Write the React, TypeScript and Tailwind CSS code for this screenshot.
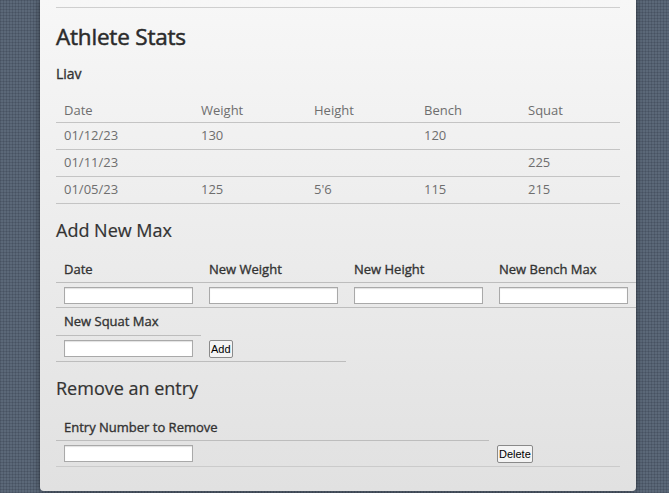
const STATS = [
  { date: '01/12/23', weight: '130', height: '', bench: '120', squat: '' },
  { date: '01/11/23', weight: '', height: '', bench: '', squat: '225' },
  { date: '01/05/23', weight: '125', height: "5'6", bench: '115', squat: '215' },
]

const COLS = ['w-[137px]', 'w-[113px]', 'w-[110px]', 'w-[104px]', 'w-[100px]']

function Field() {
  return (
    <input
      type="text"
      className="block w-[129px] h-[17px] bg-white border border-[#a9a9a9] shadow-[inset_0_1px_1px_rgba(0,0,0,0.12)] outline-none"
    />
  )
}

function Btn({ label }: { label: string }) {
  return (
    <button className="h-[18px] px-px bg-[#f4f4f4] border border-[#8a8a8a] rounded-[2px] text-[11px] leading-none font-normal text-black [-webkit-text-stroke:0] font-['Liberation_Sans',sans-serif]">
      {label}
    </button>
  )
}

export default function App() {
  return (
    <div className="min-h-[493px] h-[493px] overflow-hidden bg-[#5b6878] bg-[linear-gradient(90deg,rgba(30,40,55,0.18)_1px,transparent_1px),linear-gradient(rgba(30,40,55,0.18)_1px,transparent_1px)] bg-size-[3px_3px] font-['Open_Sans',sans-serif]">
      <div className="ml-[40px] w-[596px] h-[491px] rounded-b-[4px] bg-linear-to-b from-[#f7f7f7] to-[#e1e1e1] shadow-[0_0_6px_rgba(0,0,0,0.45)] px-4">
        {/* top rule of previous block */}
        <div className="h-[8px] border-b border-[#cfcfcf]" />

        <h1 className="mt-[14px] text-[22.5px] leading-[30px] font-normal [-webkit-text-stroke:0.5px] text-[#2b2b2b] tracking-[-0.2px]">
          Athlete Stats
        </h1>
        <p className="mt-[12px] text-[14px] leading-[20px] font-normal [-webkit-text-stroke:0.35px] text-[#333]">Liav</p>

        {/* stats table */}
        <div className="mt-[15px] w-[564px] text-[13px] text-[#6e6e6e]">
          <div className="flex h-[24px] items-center border-b border-[#c4c4c4]">
            {['Date', 'Weight', 'Height', 'Bench', 'Squat'].map((h, i) => (
              <div key={h} className={`${COLS[i]} px-2`}>{h}</div>
            ))}
          </div>
          {STATS.map((r) => (
            <div key={r.date} className="flex h-[27px] items-center border-b border-[#c4c4c4]">
              {[r.date, r.weight, r.height, r.bench, r.squat].map((v, i) => (
                <div key={i} className={`${COLS[i]} px-2`}>{v}</div>
              ))}
            </div>
          ))}
        </div>

        <h2 className="mt-[13px] text-[18px] leading-[26px] font-normal [-webkit-text-stroke:0.2px] text-[#333]">Add New Max</h2>

        {/* add new max form */}
        <div className="mt-[14px] w-[580px] text-[13px] font-normal [-webkit-text-stroke:0.35px] text-[#333]">
          <div className="flex h-[26px] items-center border-b border-[#bdbdbd]">
            {['Date', 'New Weight', 'New Height', 'New Bench Max'].map((h) => (
              <div key={h} className="w-[145px] px-2">{h}</div>
            ))}
          </div>
          <div className="flex h-[25px] items-center border-b border-[#bdbdbd]">
            {[0, 1, 2, 3].map((i) => (
              <div key={i} className="w-[145px] px-2"><Field /></div>
            ))}
          </div>
        </div>

        <div className="w-[290px] text-[13px] font-normal [-webkit-text-stroke:0.35px] text-[#333]">
          <div className="w-[145px] h-[28px] px-2 flex items-center border-b border-[#bdbdbd]">New Squat Max</div>
          <div className="flex h-[26px] items-center border-b border-[#bdbdbd]">
            <div className="w-[145px] px-2"><Field /></div>
            <div className="w-[145px] px-2"><Btn label="Add" /></div>
          </div>
        </div>

        <h2 className="mt-[13px] text-[18px] leading-[26px] font-normal [-webkit-text-stroke:0.2px] text-[#333]">Remove an entry</h2>

        <div className="mt-[14px] w-[564px] text-[13px] font-normal [-webkit-text-stroke:0.35px] text-[#333]">
          <div className="w-[433px] h-[26px] px-2 flex items-center border-b border-[#bdbdbd]">
            Entry Number to Remove
          </div>
          <div className="flex h-[26px] items-center border-b border-[#cbcbcb]">
            <div className="w-[433px] px-2"><Field /></div>
            <div className="w-[131px] px-2"><Btn label="Delete" /></div>
          </div>
        </div>
      </div>
    </div>
  )
}
